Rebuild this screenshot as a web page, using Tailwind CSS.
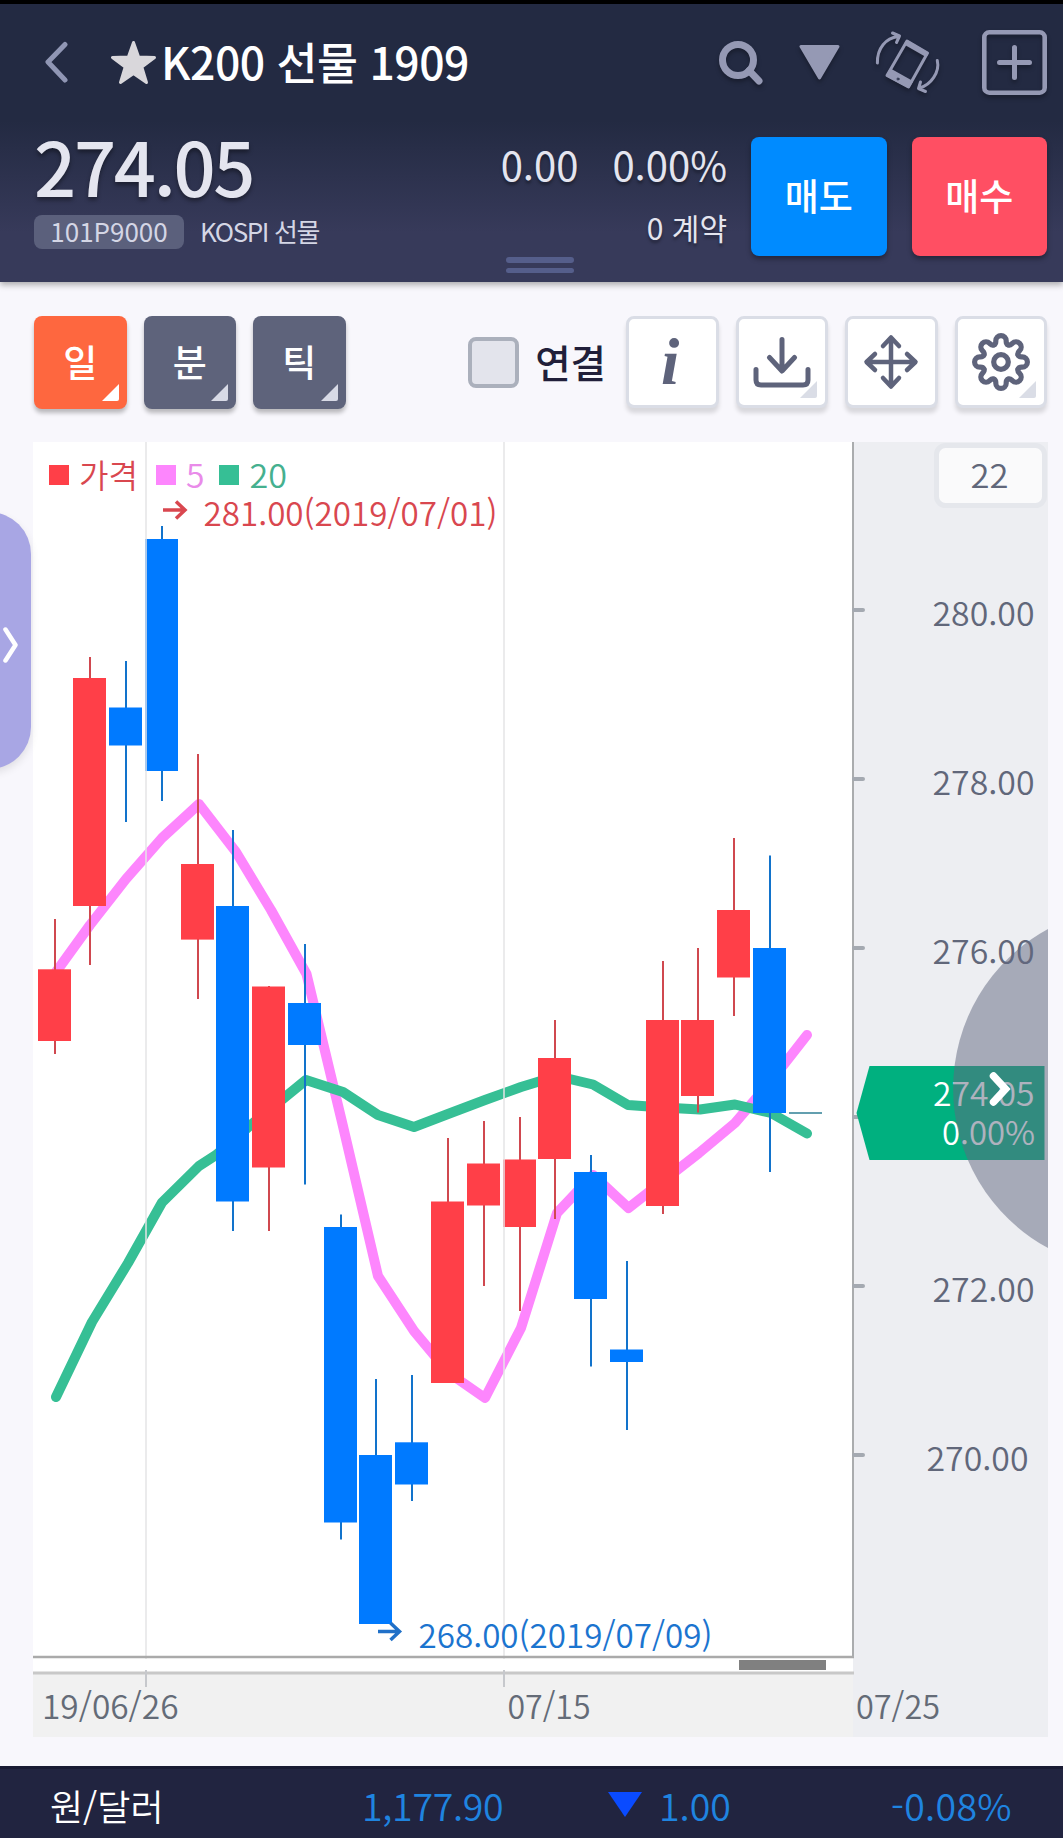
<!DOCTYPE html>
<html lang="ko">
<head>
<meta charset="utf-8">
<title>K200 선물 1909</title>
<script src="https://cdn.jsdelivr.net/npm/@tailwindcss/browser@4"></script>
</head>
<body class="bg-[#f8f7fc] font-['Noto_Sans_CJK_KR','Noto_Sans',sans-serif]">
<div class="relative flex h-[1838px] w-[1063px] flex-col overflow-hidden">

  <!-- Header -->
  <header class="relative z-10 flex h-[282px] flex-none flex-col border-t-4 border-black bg-linear-to-b from-[#232a42] from-42% to-[#373a5a] to-82% shadow-[0_3px_6px_rgba(0,0,0,0.3)]">
    <div class="flex h-[116px] flex-none items-center pl-[44px] pr-4">
      <svg class="h-11 w-6 flex-none" viewBox="0 0 24 44" fill="none" stroke="#9096b4" stroke-width="5" stroke-linecap="round" stroke-linejoin="round"><path d="M21 4.500L4 22L21 40"/></svg>
      <svg class="ml-[42px] h-[46px] w-[47px] flex-none" viewBox="0 0 47 46" fill="#d9d7db" stroke="#d9d7db" stroke-width="3" stroke-linejoin="round"><path d="M23.500 3.500L28.600 18L44.500 18.500L31.800 28L36.500 43.500L23.500 34.500L10.500 43.500L15.200 28L2.500 18.500L18.400 18Z"/></svg>
      <h1 class="-mt-0.5 ml-1 whitespace-nowrap text-[44.5px] font-medium leading-none tracking-[-0.500px] text-white">K200 선물 1909</h1>
      <div class="ml-auto flex items-center drop-shadow-[0_3px_2px_rgba(0,0,0,0.3)]">
        <svg class="h-[46px] w-[46px]" viewBox="0 0 46 46" fill="none" stroke="#9599b4" stroke-width="7"><circle cx="20" cy="21" r="15.500"/><path d="M31 31.500L41 42" stroke-linecap="round"/></svg>
        <svg class="ml-[35px] h-[36px] w-[41px]" viewBox="0 0 41 36" fill="#9599b4" stroke="#9599b4" stroke-width="3" stroke-linejoin="round"><path d="M2 2.500H39L20.500 34Z"/></svg>
        <svg class="ml-[34px] h-[64px] w-[68px]" viewBox="874 28 68 64" fill="none" stroke="#9599b4" stroke-width="3" stroke-linecap="round" stroke-linejoin="round">
          <path d="M907 39L927.500 51L908.500 85L887 73.500Z"/>
          <path d="M907 39L927.500 51L926 54L905 42Z" fill="#9599b4" stroke-width="2"/>
          <path d="M890.500 67.500L912 79.500L908.500 85L887 73.500Z" fill="#9599b4" stroke-width="2"/>
          <circle cx="898" cy="77" r="1" stroke="#232a42" stroke-width="1"/>
          <path d="M877.400 61C877 46 886 36 898 34.500M892.500 31L899.500 34L896.500 40.500M937.300 58.500C940 70 931 83 919.500 86M920.500 80L918.500 86.500L925.500 89.500"/>
        </svg>
        <svg class="ml-[40px] h-[65px] w-[65px]" viewBox="0 0 65 65" fill="none" stroke="#9599b4"><rect x="2.300" y="2.300" width="60.400" height="60.400" rx="5" stroke-width="4.600"/><path d="M32.500 17.500V47.500M17.500 32.500H47.500" stroke-width="5" stroke-linecap="round"/></svg>
      </div>
    </div>
    <div class="flex flex-1 pl-[34px] pr-4 text-[#e4e5ef]">
      <div class="flex flex-col pt-[8px]">
        <div class="text-[74px] font-medium leading-none tracking-[-2.300px] [text-shadow:0_3px_4px_rgba(0,0,0,0.4)]">274.05</div>
        <div class="mt-[13px] flex items-center">
          <div class="flex h-[34px] w-[150px] items-center justify-center rounded-lg bg-[#5b607c] pb-[3px] text-[26px] leading-none text-[#d4d6e5]">101P9000</div>
          <div class="ml-4 pb-[3px] text-[26px] leading-none tracking-[-1.400px] text-[#d4d6e5]">KOSPI 선물</div>
        </div>
      </div>
      <div class="ml-auto flex flex-col items-end pt-[24px] [text-shadow:0_3px_3px_rgba(0,0,0,0.35)]">
        <div class="flex gap-[34px] text-[40px] leading-none"><span>0.00</span><span>0.00%</span></div>
        <div class="mt-[28px] text-[30px] leading-none">0 계약</div>
      </div>
      <div class="ml-6 mt-[17px] flex gap-[25px] text-[37px] font-medium leading-none text-white">
        <button class="flex h-[119px] w-[135.500px] items-center justify-center rounded-lg bg-[#008bff] pb-0.5 shadow-[0_3px_5px_rgba(0,0,0,0.35)]">매도</button>
        <button class="flex h-[119px] w-[135.500px] items-center justify-center rounded-lg bg-[#ff4f63] pb-0.5 shadow-[0_3px_5px_rgba(0,0,0,0.35)]">매수</button>
      </div>
    </div>
    <div class="absolute left-[506px] top-[253px] flex flex-col gap-[5px]"><i class="h-[5.500px] w-[68px] rounded-sm bg-[#555e8b]"></i><i class="h-[5.500px] w-[68px] rounded-sm bg-[#555e8b]"></i></div>
  </header>

  <!-- Chart toolbar -->
  <div class="flex h-[160px] flex-none items-start pl-[34px] pr-4 pt-[34px]">
    <div class="flex gap-[17px] text-[37px] font-medium leading-none text-white">
      <button class="relative flex h-[93px] w-[92.500px] items-center justify-center rounded-lg bg-[#fe673f] pb-0.5 shadow-[0_4px_4px_rgba(0,0,0,0.25)]">일<svg class="absolute bottom-2 right-2 size-[17px]" viewBox="0 0 17 17" fill="#fff"><path d="M17 0V15Q17 17 15 17H0Z"/></svg></button>
      <button class="relative flex h-[93px] w-[92.500px] items-center justify-center rounded-lg bg-[#5e637b] pb-0.5 shadow-[0_4px_4px_rgba(0,0,0,0.25)]">분<svg class="absolute bottom-2 right-2 size-[17px]" viewBox="0 0 17 17" fill="#d8dae6"><path d="M17 0V15Q17 17 15 17H0Z"/></svg></button>
      <button class="relative flex h-[93px] w-[92.500px] items-center justify-center rounded-lg bg-[#5e637b] pb-0.5 shadow-[0_4px_4px_rgba(0,0,0,0.25)]">틱<svg class="absolute bottom-2 right-2 size-[17px]" viewBox="0 0 17 17" fill="#d8dae6"><path d="M17 0V15Q17 17 15 17H0Z"/></svg></button>
    </div>
    <div class="ml-auto flex h-[93px] items-center">
      <span class="size-[51px] rounded-lg border-4 border-[#abb0bc] bg-[#e3e4ec]"></span>
      <span class="ml-4 pb-0.5 text-[38.5px] font-medium leading-none text-[#211f3a]">연결</span>
    </div>
    <div class="ml-[20px] flex gap-[17px]">
      <button class="flex h-[92px] w-[92.500px] items-center justify-center rounded-lg border-[3px] border-[#dadde6] bg-white font-['Liberation_Serif',serif] text-[66px] font-bold italic leading-none text-[#5e637b] shadow-[0_5px_4px_rgba(0,0,0,0.13)]"><span class="-ml-1">i</span></button>
      <button class="relative flex h-[92px] w-[92.500px] items-center justify-center rounded-lg border-[3px] border-[#dadde6] bg-white shadow-[0_5px_4px_rgba(0,0,0,0.13)]">
        <svg class="size-[60px]" viewBox="-30 -30 60 60" fill="none" stroke="#5e637b" stroke-width="5" stroke-linecap="round" stroke-linejoin="round"><path d="M0 -22.500V8M-12.500 -4.500L0 9L12.500 -4.500M-26 7.500V18Q-26 23 -21 23H21Q26 23 26 18V7.500"/></svg>
        <svg class="absolute bottom-[7px] right-[8px] size-[17px]" viewBox="0 0 17 17" fill="#dadde6"><path d="M17 0V15Q17 17 15 17H0Z"/></svg>
      </button>
      <button class="flex h-[92px] w-[92.500px] items-center justify-center rounded-lg border-[3px] border-[#dadde6] bg-white shadow-[0_5px_4px_rgba(0,0,0,0.13)]">
        <svg class="size-[60px]" viewBox="-30 -30 60 60" fill="none" stroke="#5e637b" stroke-width="4.500" stroke-linecap="round" stroke-linejoin="round"><path d="M0 -24V24M-24 0H24M-8 -16L0 -24.500L8 -16M-8 16L0 24.500L8 16M-16 -8L-24.500 0L-16 8M16 -8L24.500 0L16 8"/></svg>
      </button>
      <button class="relative flex h-[92px] w-[92.500px] items-center justify-center rounded-lg border-[3px] border-[#dadde6] bg-white shadow-[0_5px_4px_rgba(0,0,0,0.13)]">
        <svg class="size-[60px]" viewBox="-30 -30 60 60" fill="none" stroke="#5e637b" stroke-width="5.200" stroke-linecap="round" stroke-linejoin="round">
          <defs><path id="tooth" d="M-7.080 -17.090Q-5.200 -17.900 -5.200 -20.500V-21.200A5.200 5.200 0 0 1 5.200 -21.200V-20.500Q5.200 -17.900 7.080 -17.090"/></defs>
          <circle r="7.300"/>
          <use href="#tooth"/><use href="#tooth" transform="rotate(45)"/><use href="#tooth" transform="rotate(90)"/><use href="#tooth" transform="rotate(135)"/><use href="#tooth" transform="rotate(180)"/><use href="#tooth" transform="rotate(225)"/><use href="#tooth" transform="rotate(270)"/><use href="#tooth" transform="rotate(315)"/>
        </svg>
        <svg class="absolute bottom-[7px] right-[8px] size-[17px]" viewBox="0 0 17 17" fill="#dadde6"><path d="M17 0V15Q17 17 15 17H0Z"/></svg>
      </button>
    </div>
  </div>

  <!-- Chart; user units are page pixels -->
  <svg class="block h-[1324px] w-[1063px] flex-none text-[33px] font-[350]" viewBox="0 442 1063 1324">
    <rect x="33" y="442" width="820" height="1231" fill="#fff"/>
    <rect x="33" y="1673" width="820" height="64" fill="#f1f1f1"/>
    <rect x="853" y="442" width="195" height="1295" fill="#edeef2"/>
    <g fill="none" stroke-width="10" stroke-linecap="round" stroke-linejoin="round">
      <polyline stroke="#fd86fd" points="56,972 90,925 126,879 162,838 199,804 236,852 271,910 306.500,974 342,1122 378,1276 414,1331 449,1373 485,1398 521,1328 557,1213 593,1175 628.500,1208 663,1181 699,1153 735,1123 771,1081 807,1035"/>
      <polyline stroke="#36bf95" points="56,1397 92,1322 128,1263 162,1202.500 199,1166 216,1155 252,1124 306,1080 343,1092 378,1115 414,1127 448,1114 485,1100 521,1087 557,1076 593,1084.500 628,1105 663,1107.500 700,1109.500 735,1104.500 771,1113 807,1133.500"/>
    </g>
    <g id="candles"></g>
    <path d="M789 1113H822" stroke="#2f7f95" stroke-width="1.500"/>
    <path d="M146 442V1659M504 442V1659" stroke="#e4e4e6" stroke-opacity=".75" stroke-width="2"/>
    <path d="M33 1657H854" stroke="#aaa" stroke-width="2.500"/>
    <path d="M33 1673H854" stroke="#c8c8c8" stroke-width="3"/>
    <path d="M146 1670V1687M504 1670V1687" stroke="#c6c8cc" stroke-width="2"/>
    <path d="M853 442V1657" stroke="#aaacae" stroke-width="2"/>
    <rect x="739" y="1660" width="87" height="10" fill="#808080"/>
    <path d="M854 610H863M854 779H863M854 948H863M854 1117H863M854 1286H863M854 1455H863" stroke="#a4a9b1" stroke-width="4" stroke-linecap="round"/>

    <rect x="49" y="465" width="20" height="20" fill="#ff3f48"/>
    <text x="79" y="487.500" fill="#d9474f" textLength="59" lengthAdjust="spacingAndGlyphs">가격</text>
    <rect x="156" y="465" width="20" height="20" fill="#fd86fd"/>
    <text x="186" y="487.500" fill="#e98be9" textLength="18.500" lengthAdjust="spacingAndGlyphs">5</text>
    <rect x="219" y="465" width="20" height="20" fill="#36bf95"/>
    <text x="249.500" y="487.500" fill="#45b08f" textLength="37.500" lengthAdjust="spacingAndGlyphs">20</text>
    <path d="M163 510H184M176 501.500L185 510L176 518.500" fill="none" stroke="#d9474f" stroke-width="3.500"/>
    <text x="203.500" y="525.500" fill="#d9474f" textLength="294" lengthAdjust="spacingAndGlyphs">281.00(2019/07/01)</text>
    <path d="M378 1631.500H399M390.500 1623L399.500 1631.500L390.500 1640" fill="none" stroke="#2070c8" stroke-width="3.500"/>
    <text x="418.500" y="1648" fill="#1b74cf" textLength="294" lengthAdjust="spacingAndGlyphs">268.00(2019/07/09)</text>

    <rect x="936.500" y="445.500" width="108" height="60" rx="9" fill="#fafafb" stroke="#e5e7ec" stroke-width="5"/>
    <g fill="#61677a">
      <text x="970.500" y="487.500" textLength="38" lengthAdjust="spacingAndGlyphs">22</text>
      <text x="932.500" y="625.500" textLength="102" lengthAdjust="spacingAndGlyphs">280.00</text>
      <text x="932.500" y="794.500" textLength="102" lengthAdjust="spacingAndGlyphs">278.00</text>
      <text x="932.500" y="963.500" textLength="102" lengthAdjust="spacingAndGlyphs">276.00</text>
      <text x="932.500" y="1301.500" textLength="102" lengthAdjust="spacingAndGlyphs">272.00</text>
      <text x="926.500" y="1470.500" textLength="102" lengthAdjust="spacingAndGlyphs">270.00</text>
    </g>
    <g fill="#646b77">
      <text x="42" y="1718.500" textLength="136.500" lengthAdjust="spacingAndGlyphs">19/06/26</text>
      <text x="507.500" y="1718.500" textLength="83" lengthAdjust="spacingAndGlyphs">07/15</text>
      <text x="856" y="1718.500" textLength="84" lengthAdjust="spacingAndGlyphs">07/25</text>
    </g>

    <path d="M856.500 1113L869.500 1066H1044.500V1160H869.500Z" fill="#00b07f"/>
    <text x="933" y="1105.500" fill="#fff" textLength="101.500" lengthAdjust="spacingAndGlyphs">274.05</text>
    <text x="942" y="1144.500" fill="#fff" textLength="93" lengthAdjust="spacingAndGlyphs">0.00%</text>
    <path d="M1048 929A181.500 181.500 0 0 0 1048 1248Z" fill="#626780" fill-opacity=".51"/>
    <path d="M993.500 1076L1005.500 1089L993.500 1102" fill="none" stroke="#fff" stroke-width="7.500" stroke-linecap="round" stroke-linejoin="miter"/>
  </svg>

  <!-- Exchange rate bar -->
  <footer class="flex h-[72px] flex-none items-center border-t-[3px] border-[#191b33] bg-[#212440] pt-0.5 pl-[50px] text-[37.500px] font-[350] leading-none text-[#1f84e0]">
    <span class="w-[312px] text-[36px] text-white">원/달러</span>
    <span class="w-[246px] tracking-[-0.300px]">1,177.90</span>
    <svg class="h-[25px] w-[34px]" viewBox="0 0 34 25" fill="#0a4bff"><path d="M0 0H34L17 25Z"/></svg>
    <span class="ml-[17px] w-[232px]">1.00</span>
    <span class="tracking-[0.300px]">-0.08%</span>
  </footer>

  <!-- Side drawer handle -->
  <div class="absolute left-[-14px] top-[512px] z-20 flex h-[257px] w-[44.500px] items-center justify-end rounded-r-[42px] bg-[#a8a6e4] pr-[12px] shadow-[0_4px_8px_rgba(0,0,0,0.1)]">
    <svg class="mt-2 h-9 w-4" viewBox="0 0 16 36" fill="none" stroke="#fff" stroke-width="4.500" stroke-linecap="round" stroke-linejoin="round"><path d="M2.500 2.500L12.500 18L2.500 33.500"/></svg>
  </div>
</div>

<script>
// [body left, body top, body bottom, high, low, rising]
const candles = [
  [38,969.3,1041,919,1054,1],[73,678,906,657,965,1],[109,707.5,745.5,661,822,0],[145,539,771,526,801,0],
  [181,864,939.6,754,999,1],[216,906,1201.5,830,1231,0],[252,986.5,1167.5,986,1231,1],[288,1003,1045,944,1184.5,0],
  [324,1227,1522.5,1214.5,1539.5,0],[359,1455,1624,1379,1624,0],[395,1442.3,1484.5,1375,1501,0],[431,1201.5,1383,1138,1383,1],
  [467,1163.5,1205.5,1121,1286,1],[503,1159.5,1227,1117,1311,1],[538,1058,1159,1020,1219,1],[574,1172,1299,1155,1366.5,0],
  [610,1349.5,1362,1261,1430,0],[646,1020,1206,961,1214,1],[681,1020,1096,948,1112.5,1],[717,910,977.5,838,1016,1],
  [753,948,1113,855.5,1172,0]
];
document.getElementById('candles').innerHTML = candles.map(([x,t,b,h,l,up]) =>
  `<path d="M${x+17} ${h}V${l}" stroke="${up ? '#d0484f' : '#1273cb'}" stroke-width="2"/><rect x="${x}" y="${t}" width="33" height="${b-t}" fill="${up ? '#ff3f48' : '#007aff'}"/>`
).join('');
</script>
</body>
</html>
